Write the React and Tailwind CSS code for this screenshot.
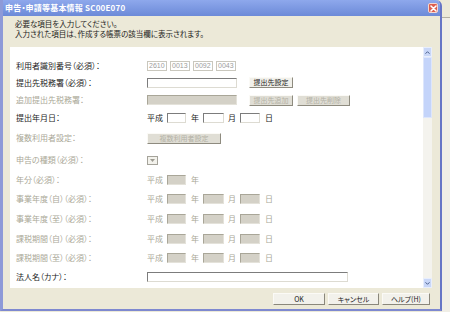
import React from "react";

const Lbl = ({ children, dis }) => (
  <div className={`w-[131px] shrink-0 leading-none ${dis ? "text-[#aaa897]" : "text-[#1c1c1c]"}`}>{children}</div>
);

const WIn = ({ w }) => (
  <div
    className="h-[10px] bg-white border border-t-[#7c7c7c] border-l-[#7c7c7c] border-r-[#dddbd2] border-b-[#dddbd2]"
    style={{ width: w }}
  />
);

const GIn = ({ w }) => (
  <div
    className="h-[10px] bg-[#d4d1c7] border border-t-[#a9a698] border-l-[#a9a698] border-r-[#e4e2da] border-b-[#e4e2da]"
    style={{ width: w }}
  />
);

const Btn = ({ children, w, dis }) => (
  <div
    className={`h-[11px] flex items-center justify-center text-[7px] leading-none border border-t-[#fbfaf6] border-l-[#fbfaf6] border-r-[#8e8b7f] border-b-[#8e8b7f] ${
      dis ? "bg-[#e0ded5] text-[#b3b1a5]" : "bg-[#f1f0ea] text-[#1c1c1c]"
    }`}
    style={{ width: w }}
  >
    {children}
  </div>
);

const Txt = ({ children, dis }) => (
  <span className={`leading-none ${dis ? "text-[#aaa897]" : "text-[#1c1c1c]"}`}>{children}</span>
);

const DateRow = ({ dis }) => (
  <div className="flex items-center">
    <Txt dis={dis}>平成</Txt>
    <div className="ml-[4px]">{dis ? <GIn w={19} /> : <WIn w={19} />}</div>
    <div className="ml-[5px]"><Txt dis={dis}>年</Txt></div>
    <div className="ml-[4px]">{dis ? <GIn w={21} /> : <WIn w={21} />}</div>
    <div className="ml-[4px]"><Txt dis={dis}>月</Txt></div>
    <div className="ml-[4px]">{dis ? <GIn w={20} /> : <WIn w={20} />}</div>
    <div className="ml-[5px]"><Txt dis={dis}>日</Txt></div>
  </div>
);

const Row = ({ h, children }) => (
  <div className="flex items-center" style={{ height: h }}>
    {children}
  </div>
);

const NumBox = ({ v }) => (
  <div className="w-[20px] h-[10px] bg-white border border-[#c9c7bd] text-[7px] leading-none text-[#9c9c9c] flex items-center pl-[1px] font-['Liberation_Sans',sans-serif]">
    {v}
  </div>
);

const BBtn = ({ children, w }) => (
  <div
    className="h-[12px] flex items-center justify-center text-[7px] leading-none text-[#1c1c1c] bg-[#f2f1eb] border border-t-[#fbfaf6] border-l-[#fbfaf6] border-r-[#8a877b] border-b-[#8a877b]"
    style={{ width: w }}
  >
    {children}
  </div>
);

export default function App() {
  return (
    <div className="w-[450px] h-[312px] bg-[#ece9d8] flex overflow-hidden font-['Noto_Sans_CJK_JP',sans-serif] [font-feature-settings:'palt'] text-[8px]">
      <div className="w-[442px] h-[311px] shrink-0 flex flex-col rounded-tr-[6px] overflow-hidden border-l-[3px] border-l-[#8e9ad8] border-r-[2px] border-r-[#6675c6] border-b-[2px] border-b-[#7e89d0]">
        {/* title bar */}
        <div className="h-[16px] shrink-0 flex items-center justify-between bg-gradient-to-b from-[#8ea8ec] to-[#6c8ad8] pl-[2px] pr-[2px]">
          <span className="text-white font-bold text-[8px] leading-none tracking-[0.2px]">申告・申請等基本情報 SC00E070</span>
          <div className="w-[10px] h-[10px] rounded-[2px] bg-[#dc5e4e] border border-[#f3d6d0] flex items-center justify-center">
            <svg width="7" height="7" viewBox="0 0 7 7">
              <path d="M1 1L6 6M6 1L1 6" stroke="white" strokeWidth="1.6" strokeLinecap="round" />
            </svg>
          </div>
        </div>
        {/* header */}
        <div className="h-[31px] shrink-0 bg-[#ece9d8] pl-[12px] pt-[3px] text-[#1c1c1c] leading-[10px] text-[7.5px]">
          <div>必要な項目を入力してください。</div>
          <div>入力された項目は、作成する帳票の該当欄に表示されます。</div>
        </div>
        {/* middle */}
        <div className="h-[241px] shrink-0 flex bg-[#ece9d8]">
          <div className="ml-[7px] w-[413px] h-full bg-white pl-[6px] pt-[10px] flex flex-col">
            <Row h={17}>
              <Lbl>利用者識別番号（必須）：</Lbl>
              <div className="flex gap-[3px]">
                <NumBox v="2610" />
                <NumBox v="0013" />
                <NumBox v="0092" />
                <NumBox v="0043" />
              </div>
            </Row>
            <Row h={17}>
              <Lbl>提出先税務署（必須）：</Lbl>
              <WIn w={90} />
              <div className="ml-[12px]"><Btn w={44}>提出先設定</Btn></div>
            </Row>
            <Row h={18}>
              <Lbl dis>追加提出先税務署：</Lbl>
              <GIn w={90} />
              <div className="ml-[12px]"><Btn w={44} dis>提出先追加</Btn></div>
              <div className="ml-[4px]"><Btn w={53} dis>提出先削除</Btn></div>
            </Row>
            <Row h={18}>
              <Lbl>提出年月日：</Lbl>
              <DateRow />
            </Row>
            <Row h={22}>
              <Lbl dis>複数利用者設定：</Lbl>
              <Btn w={74} dis>複数利用者設定</Btn>
            </Row>
            <Row h={22}>
              <Lbl dis>申告の種類（必須）：</Lbl>
              <div className="w-[11px] h-[9px] border border-[#a5a39a] bg-[#f3f2ec] flex items-center justify-center">
                <svg width="5" height="3" viewBox="0 0 5 3">
                  <path d="M0 0H5L2.5 3Z" fill="#9d9b92" />
                </svg>
              </div>
            </Row>
            <Row h={18}>
              <Lbl dis>年分（必須）：</Lbl>
              <div className="flex items-center">
                <Txt dis>平成</Txt>
                <div className="ml-[4px]"><GIn w={19} /></div>
                <div className="ml-[5px]"><Txt dis>年</Txt></div>
              </div>
            </Row>
            <Row h={20}>
              <Lbl dis>事業年度（自）（必須）：</Lbl>
              <DateRow dis />
            </Row>
            <Row h={19}>
              <Lbl dis>事業年度（至）（必須）：</Lbl>
              <DateRow dis />
            </Row>
            <Row h={22}>
              <Lbl dis>課税期間（自）（必須）：</Lbl>
              <DateRow dis />
            </Row>
            <Row h={16}>
              <Lbl dis>課税期間（至）（必須）：</Lbl>
              <DateRow dis />
            </Row>
            <Row h={22}>
              <Lbl>法人名（カナ）：</Lbl>
              <WIn w={201} />
            </Row>
          </div>
          {/* scrollbar */}
          <div className="w-[9px] h-full bg-[#f4f3ee] flex flex-col">
            <div className="h-[10px] bg-[#c9d7f8] border border-[#e8eefc] flex items-center justify-center">
              <svg width="5" height="3" viewBox="0 0 5 3">
                <path d="M0.5 2.7L2.5 0.7L4.5 2.7" stroke="#4a5f8c" strokeWidth="1" fill="none" />
              </svg>
            </div>
            <div className="h-[61px] bg-[#c4d4fa] border border-[#dde6fc]" />
            <div className="flex-1" />
            <div className="h-[10px] bg-[#c9d7f8] border border-[#e8eefc] flex items-center justify-center">
              <svg width="5" height="3" viewBox="0 0 5 3">
                <path d="M0.5 0.3L2.5 2.3L4.5 0.3" stroke="#4a5f8c" strokeWidth="1" fill="none" />
              </svg>
            </div>
          </div>
          <div className="w-[8px]" />
        </div>
        {/* bottom buttons */}
        <div className="flex-1 bg-[#ece9d8] flex justify-end items-start pt-[5px] pr-[10px] gap-[3px]">
          <BBtn w={52}>OK</BBtn>
          <BBtn w={51}>キャンセル</BBtn>
          <BBtn w={48}>ヘルプ(H)</BBtn>
        </div>
      </div>
      <div className="flex-1 flex flex-col">
        <div className="h-[18px] border-b border-[#b3b0a2] bg-[#ece9d8]" />
        <div className="flex-1 bg-[#f0eee6]" />
      </div>
    </div>
  );
}
